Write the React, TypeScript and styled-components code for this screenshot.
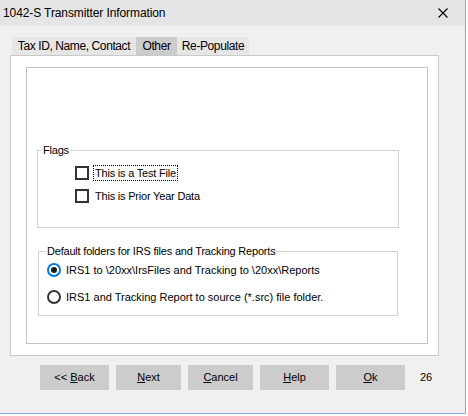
import React from "react";
import styled, { createGlobalStyle } from "styled-components";

const Global = createGlobalStyle`
  html, body { margin: 0; padding: 0; background: #ffffff; }
  body { font-family: "Liberation Sans", Arial, sans-serif; color: #000; }
  * { box-sizing: border-box; }
`;

const Window = styled.div`
  width: 466px;
  height: 414px;
  background: #f0f0f0;
  border-right: 1px solid #8aa9d6;
  border-bottom: 1px solid #8aa9d6;
  display: flex;
  flex-direction: column;
`;

const TitleBar = styled.div`
  height: 26px;
  flex: none;
  background: #e5e5e5;
  display: flex;
  align-items: center;
  justify-content: space-between;
  padding: 0 17px 0 3px;
`;

const Title = styled.span`
  font-family: "Liberation Sans", Arial, sans-serif;
  font-size: 12px;
  line-height: 16px;
  letter-spacing: -0.1px;
  color: #000;
`;

const CloseIcon = () => (
  <svg width="10" height="10" viewBox="0 0 10 10" style={{ display: "block" }}>
    <path d="M0.5 0.5 L9.5 9.5 M9.5 0.5 L0.5 9.5" stroke="#000" strokeWidth="1.1" fill="none" />
  </svg>
);

const TabStrip = styled.div`
  display: flex;
  margin: 11px 0 0 12px;
  height: 18px;
`;

const Tab = styled.div<{ $w: number; $active?: boolean }>`
  width: ${(p) => p.$w}px;
  height: 18px;
  background: ${(p) => (p.$active ? "#cccccc" : "#e6e6e6")};
  font-size: 12px;
  line-height: 18px;
  letter-spacing: -0.4px;
  text-align: center;
  color: #000;
`;

const Panel = styled.div`
  margin-left: 10px;
  width: 429px;
  height: 301px;
  background: #ffffff;
  border: 1px solid #c9c9c9;
  padding: 11px 0 0 15px;
`;

const Frame = styled.div`
  width: 402px;
  height: 277px;
  border: 1px solid #c3c3c3;
  background: #fff;
  display: flex;
  flex-direction: column;
`;

const Group = styled.div<{ $left: number; $top: number; $w: number; $h: number }>`
  margin: ${(p) => p.$top}px 0 0 ${(p) => p.$left}px;
  width: ${(p) => p.$w}px;
  height: ${(p) => p.$h}px;
  border: 1px solid #d3d3d3;
  display: flex;
  flex-direction: column;
`;

const Legend = styled.span<{ $indent: number }>`
  align-self: flex-start;
  margin: -7px 0 0 ${(p) => p.$indent}px;
  padding: 0 1px;
  background: #fff;
  font-size: 11px;
  line-height: 13px;
  letter-spacing: -0.2px;
`;

const OptionRow = styled.div<{ $top: number; $pad: number }>`
  display: flex;
  align-items: center;
  height: 14px;
  margin-top: ${(p) => p.$top}px;
  padding-left: ${(p) => p.$pad}px;
`;

const CheckBox = styled.span`
  width: 14px;
  height: 14px;
  flex: none;
  border: 2px solid #333333;
  background: #fff;
`;

const CheckLabel = styled.span<{ $focus?: boolean }>`
  margin-left: 4px;
  padding: 0 1px;
  border: 1px ${(p) => (p.$focus ? "dotted #000" : "solid transparent")};
  font-size: 11px;
  line-height: 14px;
  letter-spacing: -0.2px;
  white-space: nowrap;
`;

const Radio = styled.span<{ $on?: boolean }>`
  width: 14px;
  height: 14px;
  flex: none;
  border-radius: 50%;
  border: 2px solid ${(p) => (p.$on ? "#0078d7" : "#333333")};
  background: #fff;
  display: flex;
  align-items: center;
  justify-content: center;
  &::after {
    content: "";
    display: ${(p) => (p.$on ? "block" : "none")};
    width: 6px;
    height: 6px;
    border-radius: 50%;
    background: #1a1a1a;
  }
`;

const RadioLabel = styled.span`
  margin-left: 5px;
  font-size: 11px;
  line-height: 14px;
  letter-spacing: 0px;
  white-space: nowrap;
`;

const Footer = styled.div`
  display: flex;
  align-items: center;
  gap: 7px;
  margin: 9px 0 0 40px;
`;

const Button = styled.div<{ $w: number }>`
  width: ${(p) => p.$w}px;
  height: 25px;
  background: #cccccc;
  font-size: 11px;
  line-height: 25px;
  text-align: center;
  color: #000;
`;

const PageNo = styled.span`
  margin-left: 8px;
  font-size: 11px;
  line-height: 25px;
`;

export default function App() {
  return (
    <>
      <Global />
      <Window>
        <TitleBar>
          <Title>1042-S Transmitter Information</Title>
          <CloseIcon />
        </TitleBar>
        <TabStrip>
          <Tab $w={124}>Tax ID, Name, Contact</Tab>
          <Tab $w={41} $active>Other</Tab>
          <Tab $w={72}>Re-Populate</Tab>
        </TabStrip>
        <Panel>
          <Frame>
            <Group $left={10} $top={82} $w={362} $h={78}>
              <Legend $indent={4}>Flags</Legend>
              <OptionRow $top={9} $pad={37}>
                <CheckBox />
                <CheckLabel $focus>This is a Test File</CheckLabel>
              </OptionRow>
              <OptionRow $top={9} $pad={37}>
                <CheckBox />
                <CheckLabel>This is Prior Year Data</CheckLabel>
              </OptionRow>
            </Group>
            <Group $left={11} $top={23} $w={360} $h={65}>
              <Legend $indent={7}>Default folders for IRS files and Tracking Reports</Legend>
              <OptionRow $top={5} $pad={8}>
                <Radio $on />
                <RadioLabel>IRS1 to \20xx\IrsFiles and Tracking to \20xx\Reports</RadioLabel>
              </OptionRow>
              <OptionRow $top={13} $pad={8}>
                <Radio />
                <RadioLabel>IRS1 and Tracking Report to source (*.src) file folder.</RadioLabel>
              </OptionRow>
            </Group>
          </Frame>
        </Panel>
        <Footer>
          <Button $w={69}>&lt;&lt; <u>B</u>ack</Button>
          <Button $w={65}><u>N</u>ext</Button>
          <Button $w={65}><u>C</u>ancel</Button>
          <Button $w={69}><u>H</u>elp</Button>
          <Button $w={69}><u>O</u>k</Button>
          <PageNo>26</PageNo>
        </Footer>
      </Window>
    </>
  );
}
